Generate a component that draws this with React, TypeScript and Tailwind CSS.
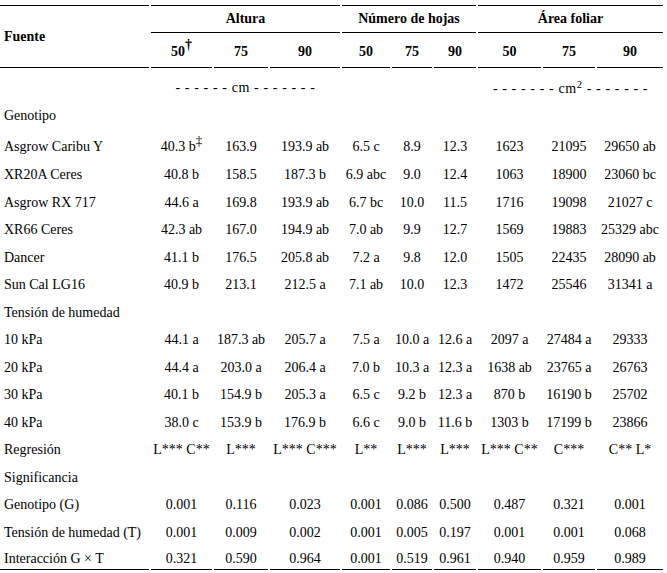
import React from "react";

const cols =
  "grid grid-cols-[149px_61px_54px_70px_48px_40px_42px_63px_52px_66px] gap-x-[2px]";

type Cell = React.ReactNode;

const genotipos: [string, Cell[]][] = [
  [
    "Asgrow Caribu Y",
    [
      <>
        40.3 b<sup className="text-[13px]">‡</sup>
      </>,
      "163.9",
      "193.9 ab",
      "6.5 c",
      "8.9",
      "12.3",
      "1623",
      "21095",
      "29650 ab",
    ],
  ],
  ["XR20A Ceres", ["40.8 b", "158.5", "187.3 b", "6.9 abc", "9.0", "12.4", "1063", "18900", "23060 bc"]],
  ["Asgrow RX 717", ["44.6 a", "169.8", "193.9 ab", "6.7 bc", "10.0", "11.5", "1716", "19098", "21027 c"]],
  ["XR66 Ceres", ["42.3 ab", "167.0", "194.9 ab", "7.0 ab", "9.9", "12.7", "1569", "19883", "25329 abc"]],
  ["Dancer", ["41.1 b", "176.5", "205.8 ab", "7.2 a", "9.8", "12.0", "1505", "22435", "28090 ab"]],
  ["Sun Cal LG16", ["40.9 b", "213.1", "212.5 a", "7.1 ab", "10.0", "12.3", "1472", "25546", "31341 a"]],
];

const tension: [string, Cell[]][] = [
  ["10 kPa", ["44.1 a", "187.3 ab", "205.7 a", "7.5 a", "10.0 a", "12.6 a", "2097 a", "27484 a", "29333"]],
  ["20 kPa", ["44.4 a", "203.0 a", "206.4 a", "7.0 b", "10.3 a", "12.3 a", "1638 ab", "23765 a", "26763"]],
  ["30 kPa", ["40.1 b", "154.9 b", "205.3 a", "6.5 c", "9.2 b", "12.3 a", "870 b", "16190 b", "25702"]],
  ["40 kPa", ["38.0 c", "153.9 b", "176.9 b", "6.6 c", "9.0 b", "11.6 b", "1303 b", "17199 b", "23866"]],
  ["Regresión", ["L*** C**", "L***", "L*** C***", "L**", "L***", "L***", "L*** C**", "C***", "C** L*"]],
];

const signif: [string, Cell[]][] = [
  ["Genotipo (G)", ["0.001", "0.116", "0.023", "0.001", "0.086", "0.500", "0.487", "0.321", "0.001"]],
  ["Tensión de humedad (T)", ["0.001", "0.009", "0.002", "0.001", "0.005", "0.197", "0.001", "0.001", "0.068"]],
  ["Interacción G × T", ["0.321", "0.590", "0.964", "0.001", "0.519", "0.961", "0.940", "0.959", "0.989"]],
];

function Row({
  label,
  cells,
  h,
  last,
}: {
  label: string;
  cells?: Cell[];
  h: string;
  last?: boolean;
}) {
  const edge = last ? " border-b border-black" : "";
  return (
    <div className={`${cols} ${h}`}>
      <div className={`flex items-end pb-[2px] pl-[4px]${edge}`}>
        <span>{label}</span>
      </div>
      {Array.from({ length: 9 }).map((_, i) => (
        <div key={i} className={`flex items-end justify-center pb-[2px]${edge}`}>
          <span>{cells ? cells[i] : null}</span>
        </div>
      ))}
    </div>
  );
}

export default function App() {
  return (
    <div
      className="min-h-screen bg-white pt-[5px] text-[14px] leading-4 whitespace-nowrap text-black"
      style={{ fontFamily: '"Liberation Serif", "Times New Roman", serif' }}
    >
      <div className="w-[663px]">
        {/* header */}
        <div className={`${cols} grid-rows-[28px_35px] font-bold`}>
          <div className="row-span-2 flex items-center border-y border-black pl-[4px]">Fuente</div>
          <div className="col-span-3 flex items-center justify-center border-y border-black">Altura</div>
          <div className="col-span-3 flex items-center justify-center border-y border-black">
            Número de hojas
          </div>
          <div className="col-span-3 flex items-center justify-center border-y border-black">Área foliar</div>
          <div className="flex items-center justify-center border-b border-black pt-[3px]">
            <span>
              50<sup className="text-[14px]">†</sup>
            </span>
          </div>
          {["75", "90", "50", "75", "90", "50", "75", "90"].map((t, i) => (
            <div key={i} className="flex items-center justify-center border-b border-black pt-[3px]">
              <span>{t}</span>
            </div>
          ))}
        </div>

        {/* units */}
        <div className={`${cols} h-[30px]`}>
          <div />
          <div className="col-span-3 flex items-end justify-center pb-[2px]">
            <span className="tracking-[0.6px]">- - - - - - cm - - - - - - -</span>
          </div>
          <div className="col-span-3" />
          <div className="col-span-3 flex items-end justify-center pb-[1px]">
            <span className="tracking-[0.6px]">
              - - - - - - - cm<sup>2</sup> - - - - - - -
            </span>
          </div>
        </div>

        <Row label="Genotipo" h="h-[28px]" />
        {genotipos.map(([l, c], i) => (
          <Row key={l} label={l} cells={c} h={i === 0 ? "h-[31px]" : i === 1 ? "h-[28px]" : "h-[27.5px]"} />
        ))}
        <Row label="Tensión de humedad" h="h-[27.5px]" />
        {tension.map(([l, c]) => (
          <Row key={l} label={l} cells={c} h="h-[27.5px]" />
        ))}
        <Row label="Significancia" h="h-[27.5px]" />
        {signif.map(([l, c], i) => (
          <Row key={l} label={l} cells={c} h="h-[27.5px]" last={i === signif.length - 1} />
        ))}
      </div>
    </div>
  );
}
